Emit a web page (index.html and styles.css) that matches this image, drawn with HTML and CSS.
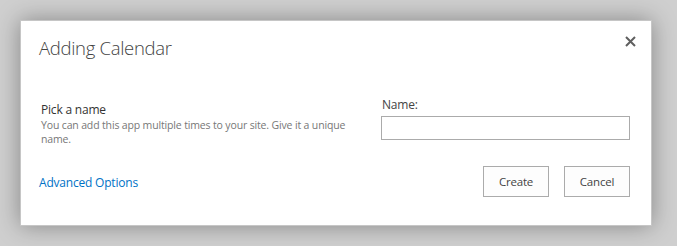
FILE: index.html
```html
<!DOCTYPE html>
<html>
<head>
<meta charset="utf-8">
<link rel="stylesheet" href="styles.css">
</head>
<body>
<div class="dialog">
  <div class="header">
    <h1 class="title">Adding Calendar</h1>
    <span class="close" aria-label="Close">
      <svg width="11" height="11" viewBox="0 0 11 11"><path d="M1 1 L10 10 M10 1 L1 10" stroke="#5f5f5f" stroke-width="2" fill="none"/></svg>
    </span>
  </div>
  <div class="body">
    <div class="section">
      <div class="section-title">Pick a name</div>
      <div class="section-desc">You can add this app multiple times to your site. Give it a unique name.</div>
    </div>
    <div class="field">
      <label class="field-label">Name:</label>
      <input class="field-input" type="text">
    </div>
  </div>
  <div class="footer">
    <a class="advanced" href="#">Advanced Options</a>
    <div class="buttons">
      <button class="btn">Create</button>
      <button class="btn">Cancel</button>
    </div>
  </div>
</div>
</body>
</html>
```
FILE: styles.css
```css
html, body {
  margin: 0;
  padding: 0;
}
body {
  background: #cfcfcf;
  padding: 20px 0 0 20px;
  font-family: "Open Sans", "Noto Sans", sans-serif;
  height: 246px;
  box-sizing: border-box;
  overflow: hidden;
}
.dialog {
  width: 632px;
  height: 206px;
  box-sizing: border-box;
  background: #fff;
  border: 1px solid #c6c6c6;
  box-shadow: 0 0 22px rgba(0, 0, 0, 0.35);
  padding: 0 21px 0 18px;
  display: flex;
  flex-direction: column;
}
.header {
  display: flex;
  justify-content: space-between;
  align-items: flex-start;
  height: 80px;
}
.title {
  margin: 14px 0 0 0;
  font-weight: 300;
  font-size: 18.5px;
  color: #444;
  letter-spacing: -0.3px;
}
.close {
  margin-top: 15px;
  margin-right: -6px;
  display: flex;
}
.body {
  display: flex;
  justify-content: space-between;
  height: 63px;
}
.section {
  width: 330px;
  padding-left: 2px;
  padding-top: 1px;
}
.section-title {
  font-size: 12px;
  color: #333;
  line-height: 16px;
  letter-spacing: -0.2px;
}
.section-desc {
  font-size: 10.5px;
  color: #777;
  line-height: 14px;
  letter-spacing: -0.15px;
}
.field {
  display: flex;
  flex-direction: column;
  width: 249px;
}
.field-label {
  font-size: 12px;
  color: #444;
  line-height: 16px;
  padding-left: 1px;
  margin-top: -4px;
  letter-spacing: -0.2px;
}
.field-input {
  width: 249px;
  height: 24px;
  box-sizing: border-box;
  border: 1px solid #ababab;
  margin: 3px 0 0 0;
  padding: 0;
}
.footer {
  display: flex;
  justify-content: space-between;
  align-items: center;
  height: 34px;
  margin-top: 0;
}
.advanced {
  font-size: 12px;
  color: #0072c6;
  text-decoration: none;
  letter-spacing: -0.2px;
  margin-top: 3px;
}
.buttons {
  display: flex;
  gap: 15px;
}
.btn {
  width: 66px;
  height: 31px;
  box-sizing: border-box;
  border: 1px solid #ababab;
  background: #fdfdfd;
  font-family: "Open Sans", "Noto Sans", sans-serif;
  font-size: 11.5px;
  color: #444;
  padding: 0;
  letter-spacing: -0.2px;
}
```
